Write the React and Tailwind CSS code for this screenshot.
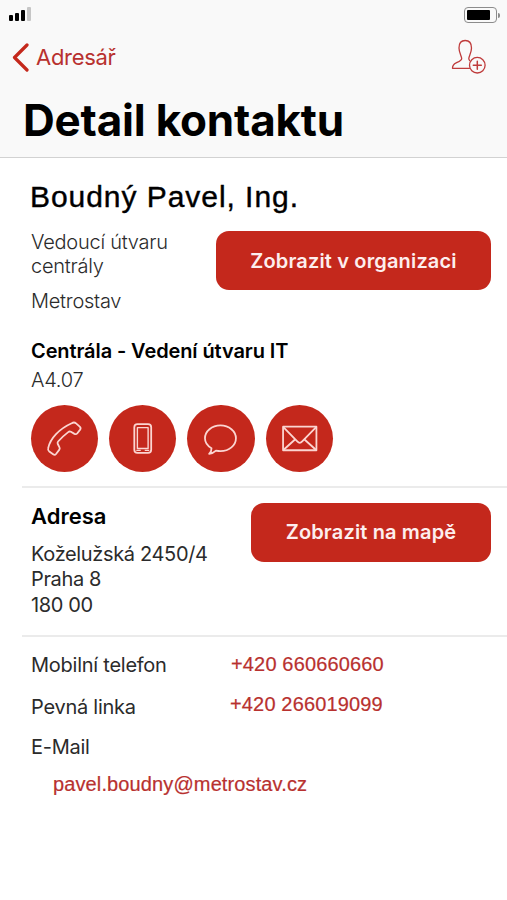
import clsx from 'clsx';

const signalBars = ['h-[6px] bg-black', 'h-[8px] bg-black', 'h-[11px] bg-black', 'h-[14px] bg-[#c6c6c6]'];

const inter = "font-['Inter',sans-serif]";
const arial = "font-['Liberation_Sans',sans-serif]";

function StatusBar() {
  return (
    <div className="flex h-[30px] items-start justify-between pl-[8.5px] pr-[7px] pt-[7px]">
      <div className="flex h-[14px] items-end gap-[2.3px]">
        {signalBars.map((bar) => (
          <span key={bar} className={clsx('w-[4px] rounded-[1px]', bar)} />
        ))}
      </div>
      <div className="flex items-center gap-px">
        <div className="h-[16px] w-[33px] rounded-[4px] border border-[#8c8c8c] p-[2px]">
          <div className="h-full w-[23px] rounded-[1px] bg-black" />
        </div>
        <span className="h-[5px] w-[2px] rounded-r-full bg-[#8c8c8c]" />
      </div>
    </div>
  );
}

function AddContactIcon() {
  return (
    <svg width="36" height="36" viewBox="0 0 36 36" fill="none" stroke="#bf3b3b" strokeWidth="1.3" strokeLinecap="round" strokeLinejoin="round">
      <path d="M19.5 29.3H2.5c0-2.8 1.2-4.4 3.7-5.5 3-1.3 5.5-2.1 5.5-4.3 0-2.3-2.7-5.5-2.7-10.5C9 4.2 11.3 1.5 15.2 1.5s6.3 2.7 6.3 7.500c0 5-2.7 8.200-2.7 10.500 0 .9.3 1.500.9 2.100" />
      <circle cx="27.3" cy="26.2" r="7.8" />
      <path d="M27.3 22.2v8M23.3 26.2h8" strokeWidth="1.5" />
    </svg>
  );
}

function PhoneIcon() {
  return (
    <path
      d="M42 18.400c1.600-1 3-1.100 4.400.1l3.700 3.300c1.100 1 1.200 1.900.4 3l-2.800 3.600c-.8 1-1.700 1.300-2.900.7l-3.600-2.100c-1-.5-1.800-.4-2.700.3-4 3-7.200 6.100-10.200 9.500-.7.800-.8 1.500-.3 2.500l1.700 3.300c.5 1 .4 1.700-.3 2.600l-3.200 4.200c-.8 1-1.800 1.100-2.900.3l-3.900-2.800c-1.200-.9-1.500-1.900-1.100-3.400C20.300 33.700 29.500 24 42 18.400z"
      transform="translate(-1 0)"
    />
  );
}

function MobileIcon() {
  return (
    <>
      <rect x="25.5" y="19.2" width="17" height="29" rx="3.2" />
      <rect x="28.6" y="22.8" width="10.8" height="21" strokeWidth="1.4" />
      <path d="M27.5 45.8h4.5M36 45.8h4.5" strokeWidth="1.2" />
    </>
  );
}

function MessageIcon() {
  return (
    <path d="M24.7 43.5c-4.1-2.2-6.6-5.7-6.6-9.9 0-7.2 6.9-13 15.6-13s15.6 5.8 15.6 13-6.9 12.9-15.6 12.9c-1.6 0-3.1-.2-4.5-.5-1.8 1.7-4 2.9-6.9 3.2 1.7-1.7 2.5-3.5 2.4-5.7z" />
  );
}

function MailIcon() {
  return (
    <>
      <rect x="17.2" y="21.8" width="33.6" height="23.8" />
      <path d="M17.5 22.2l14 14.5c1.7 1.8 3.3 1.8 5 0l14-14.5M17.5 45.3l12-10.8M50.5 45.3l-12-10.8" />
    </>
  );
}

const actions = [
  { label: 'Zavolat', Icon: PhoneIcon },
  { label: 'Mobil', Icon: MobileIcon },
  { label: 'Zpráva', Icon: MessageIcon },
  { label: 'E-mail', Icon: MailIcon }
];

function RedButton({ className, children }) {
  return (
    <button className={clsx('h-[59px] shrink-0 rounded-[13px] bg-[#c4281c] text-[20px] font-semibold tracking-[0.15px] text-[#fdeeee]', className)}>
      {children}
    </button>
  );
}

export default function App() {
  return (
    <div className={clsx('h-[900px] w-[507px] overflow-hidden bg-white text-[#2b2b2b]', inter)}>
      {/* Navigation */}
      <header className="h-[158px] border-b border-[#d2d2d2] bg-[#f9f9f9]">
        <StatusBar />
        <div className="flex h-[54px] justify-between pl-[12px] pr-[21px]">
          <button className="flex items-center gap-[7px] text-[22px] tracking-[-0.3px] text-[#b8312f]">
            <svg width="17" height="29" viewBox="0 0 17 29" fill="none" stroke="#c4281c" strokeWidth="3.2" strokeLinecap="round" strokeLinejoin="round">
              <path d="M15 2L2.5 14.5 15 27" />
            </svg>
            <span className="leading-[28px]">Adresář</span>
          </button>
          <button className="mt-[9px] h-[36px]" aria-label="Přidat kontakt">
            <AddContactIcon />
          </button>
        </div>
        <h1 className="pl-[23px] pt-[10px] text-[44px] font-bold leading-[52px] tracking-[-0.2px] text-black">Detail kontaktu</h1>
      </header>

      {/* Person */}
      <section className="pl-[31px] pr-[16px] pt-[20px]">
        <h2 className={clsx('-ml-px text-[30px] leading-[38px] tracking-[0.95px] text-black [-webkit-text-stroke:0.4px_black]', arial)}>
          Boudný Pavel, Ing.
        </h2>
        <div className="mt-[15px] flex justify-between">
          <div className="text-[20px] font-[350] leading-[23.5px] tracking-[-0.25px]">
            <p>
              Vedoucí útvaru
              <br />
              centrály
            </p>
            <p className="mt-[12px]">Metrostav</p>
          </div>
          <RedButton className="w-[275px]">Zobrazit v organizaci</RedButton>
        </div>
        <h3 className="mt-[23px] text-[20px] font-semibold leading-[28px] tracking-[-0.1px] text-black">Centrála - Vedení útvaru IT</h3>
        <p className="mt-px text-[20px] font-[350] leading-[28px] tracking-[-0.25px]">A4.07</p>
        <div className="-ml-[0.5px] mt-[11px] flex gap-[10.9px]">
          {actions.map(({ label, Icon }) => (
            <button key={label} aria-label={label} className="size-[67.5px] rounded-full bg-[#c4281c]">
              <svg width="67.5" height="67.5" viewBox="0 0 68 68" fill="none" stroke="#fbd5d1" strokeWidth="1.8" strokeLinejoin="round">
                <Icon />
              </svg>
            </button>
          ))}
        </div>
      </section>

      {/* Address */}
      <section className="ml-[22px] mt-[13.5px] flex h-[149px] justify-between border-t-2 border-[#ebebeb] pl-[9px] pr-[16px] pt-[15px]">
        <div>
          <h3 className="-mt-[2px] text-[22px] font-semibold leading-[30px] text-black">Adresa</h3>
          <p className="mt-[11px] text-[20px] leading-[25.8px] tracking-[-0.35px]">
            Koželužská 2450/4
            <br />
            Praha 8
            <br />
            180 00
          </p>
        </div>
        <RedButton className="w-[240px]">Zobrazit na mapě</RedButton>
      </section>

      {/* Contact lines */}
      <section className="ml-[22px] border-t-2 border-[#ebebeb] pl-[9px] pt-[14px] text-[20px] leading-[28px] tracking-[-0.25px]">
        <div className="flex h-[42px]">
          <span className="w-[200px]">Mobilní telefon</span>
          <a className={clsx('-mt-px tracking-[0.15px] text-[#b8312f] [-webkit-text-stroke:0.2px_#b8312f]', arial)}>+420 660660660</a>
        </div>
        <div className="flex h-[41px]">
          <span className="w-[199px]">Pevná linka</span>
          <a className={clsx('-mt-[3px] tracking-[0.15px] text-[#b8312f] [-webkit-text-stroke:0.2px_#b8312f]', arial)}>+420 266019099</a>
        </div>
        <div className="-mt-px">E-Mail</div>
        <a className={clsx('ml-[22px] mt-[9px] block tracking-[0.12px] text-[#b8312f] [-webkit-text-stroke:0.2px_#b8312f]', arial)}>
          pavel.boudny@metrostav.cz
        </a>
      </section>
    </div>
  );
}
